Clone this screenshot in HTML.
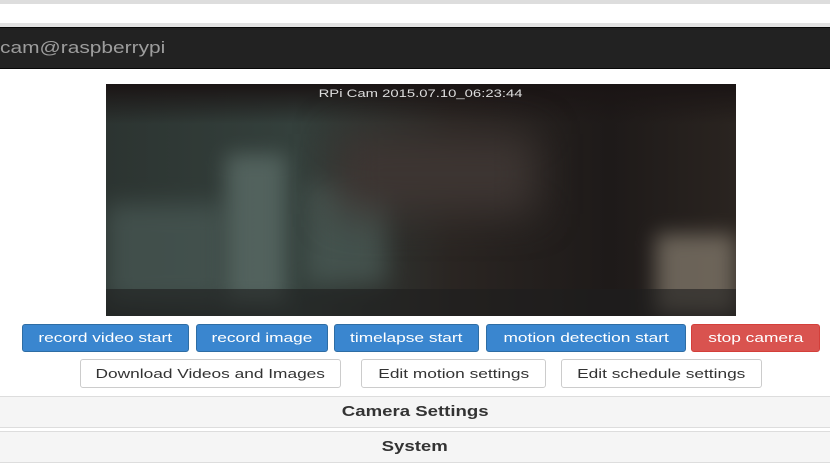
<!DOCTYPE html>
<html><head><style>
body{margin:0;width:830px;height:464px;overflow:hidden;background:#fff;font-family:"Liberation Sans",sans-serif;position:relative}
.a{position:absolute}
.s{display:inline-block;transform:scaleX(1.33);transform-origin:center}
.btn{position:absolute;border-radius:3px;color:#fff;font-size:13px;text-align:center;box-sizing:border-box;white-space:nowrap}
.b{background:#3a86cf;border:1px solid #2e6da4;top:324px;height:28px;line-height:26px}
.r{background:#d9534f;border:1px solid #d43f3a;top:324px;height:28px;line-height:26px}
.w{background:#fff;border:1px solid #ccc;color:#333;top:359px;height:29px;line-height:27px}
.p{position:absolute;left:0;width:830px;background:#f5f5f5;border-top:1px solid #ddd;border-bottom:1px solid #ddd;text-align:center;font-size:15px;font-weight:bold;color:#333}
.p .s{transform:scaleX(1.24)}
</style></head><body>
<div class="a" style="left:0;top:0;width:830px;height:4px;background:#ddd"></div>
<div class="a" style="left:0;top:23px;width:830px;height:4px;background:#e2e2e2"></div>
<div class="a" style="left:0;top:27px;width:830px;height:42px;background:#222;border-top:1px solid #080808;border-bottom:1px solid #080808;box-sizing:border-box"></div>
<div class="a" style="left:0;top:38px;color:#9d9d9d;font-size:17px"><span class="s" style="transform:scaleX(1.23);transform-origin:left">cam@raspberrypi</span></div>
<div class="a" style="left:106px;top:84px;width:630px;height:232px;overflow:hidden;background:linear-gradient(90deg,#2c3431 0%,#34403c 30%,#2a2522 55%,#1e1a19 80%,#2a2420 100%)">
 <div class="a" style="left:0;top:0;width:630px;height:40px;background:linear-gradient(#1a1414,rgba(26,20,20,0))"></div>
 <div class="a" style="left:0;top:120px;width:120px;height:100px;background:#4a5a56;filter:blur(12px);opacity:.7"></div>
 <div class="a" style="left:120px;top:70px;width:60px;height:150px;background:#5a6b66;filter:blur(10px);opacity:.8"></div>
 <div class="a" style="left:200px;top:100px;width:80px;height:100px;background:#4c5d58;filter:blur(12px);opacity:.7"></div>
 <div class="a" style="left:230px;top:50px;width:200px;height:80px;background:#3d3532;filter:blur(20px)"></div>
 <div class="a" style="left:550px;top:150px;width:80px;height:80px;background:#9a9080;filter:blur(10px);opacity:.6"></div>
 <div class="a" style="left:0;top:205px;width:630px;height:27px;background:#1e1e1e;opacity:.6"></div>
 <div class="a" style="left:0;top:4px;width:630px;text-align:center;color:#ddd;font-size:11px"><span class="s" style="transform:scaleX(1.35)">RPi Cam 2015.07.10_06:23:44</span></div>
</div>
<div class="btn b" style="left:22px;width:167px"><span class="s">record video start</span></div>
<div class="btn b" style="left:196px;width:132px"><span class="s">record image</span></div>
<div class="btn b" style="left:334px;width:145px"><span class="s">timelapse start</span></div>
<div class="btn b" style="left:486px;width:200px"><span class="s">motion detection start</span></div>
<div class="btn r" style="left:691px;width:129px"><span class="s">stop camera</span></div>
<div class="btn w" style="left:80px;width:261px"><span class="s">Download Videos and Images</span></div>
<div class="btn w" style="left:361px;width:185px"><span class="s">Edit motion settings</span></div>
<div class="btn w" style="left:561px;width:201px"><span class="s">Edit schedule settings</span></div>
<div class="p" style="top:396px;height:30px;line-height:30px"><span class="s">Camera Settings</span></div>
<div class="p" style="top:431px;height:30px;line-height:30px"><span class="s">System</span></div>
</body></html>
